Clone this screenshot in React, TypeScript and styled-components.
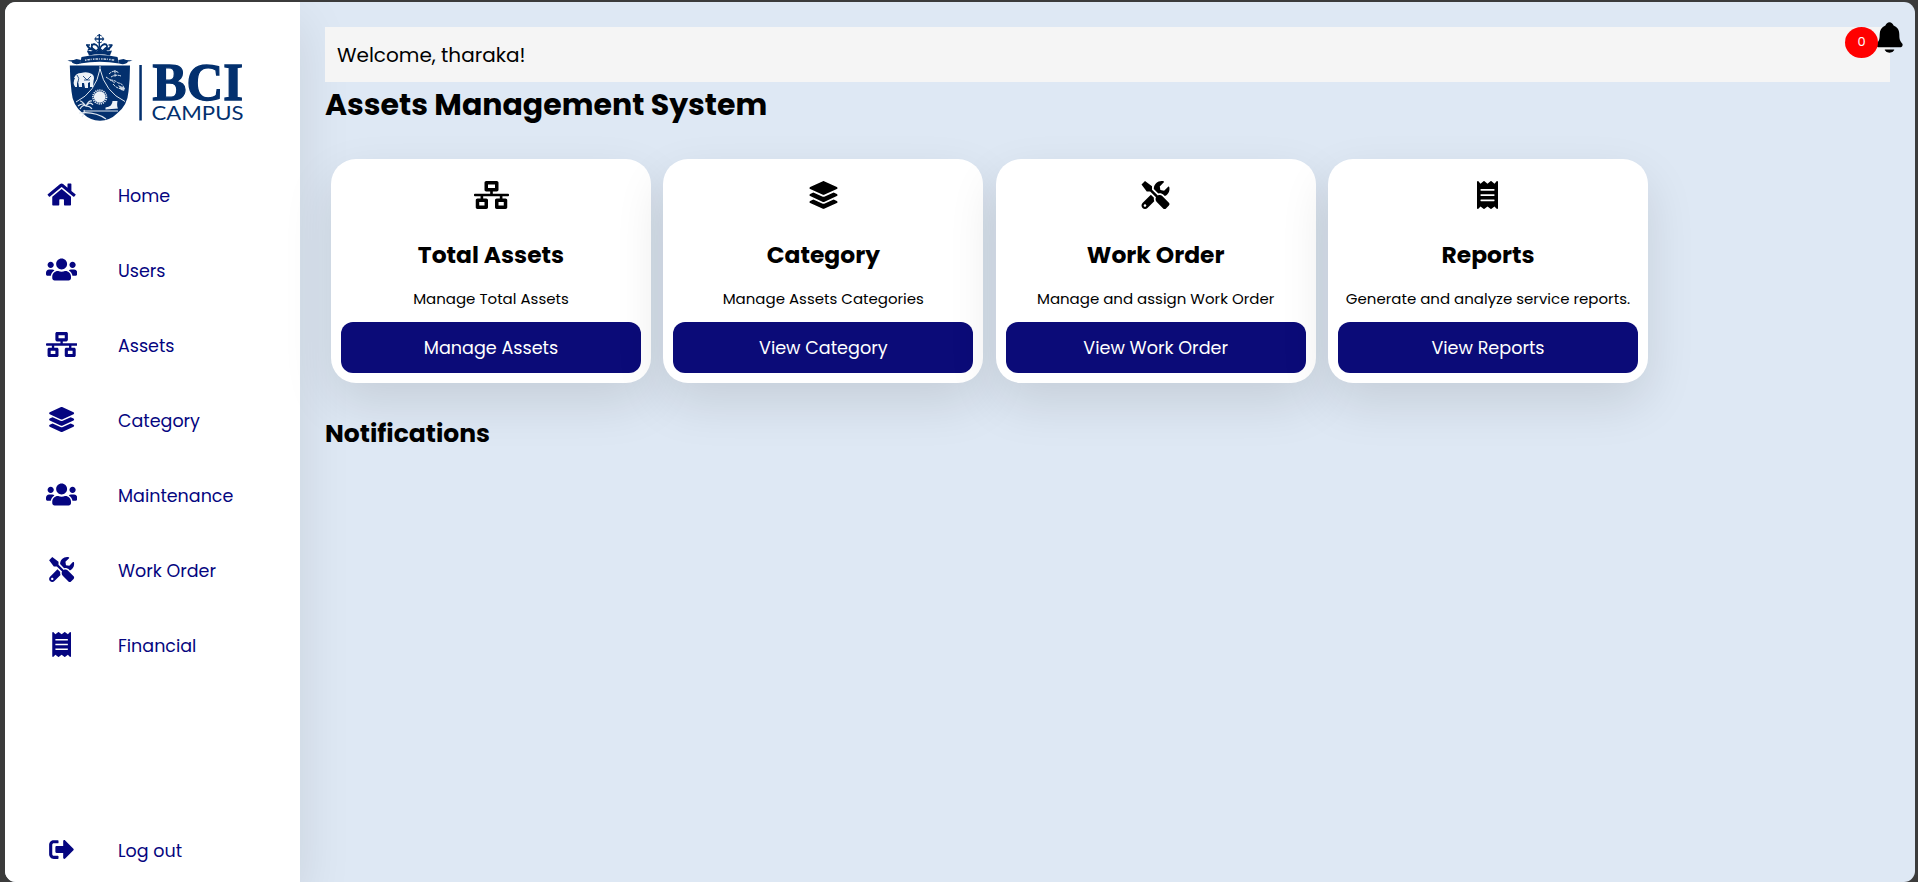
import React from 'react';
import styled, { createGlobalStyle } from 'styled-components';
import {
  FaHome, FaUsers, FaNetworkWired, FaLayerGroup, FaTools, FaReceipt, FaSignOutAlt,
} from 'react-icons/fa';
import { IoNotifications } from 'react-icons/io5';

const navy = '#050580';

const GlobalStyle = createGlobalStyle`
  * { box-sizing: border-box; margin: 0; padding: 0; }
  body { background: #3b3b3b; font-family: Poppins, Inter, 'Open Sans', sans-serif; color: #000; }
`;

const Page = styled.div`
  height: 882px;
  padding: 2px 3px 0 5px;
`;

const Window = styled.div`
  display: flex;
  height: 880px;
  overflow: hidden;
  border-radius: 11px;
  background: #dee8f4;
`;

const Sidebar = styled.aside`
  display: flex;
  flex-direction: column;
  flex: 0 0 295px;
  background: #fff;
  box-shadow: 0 20px 50px rgba(0, 0, 0, 0.1);
`;

const Logo = styled.svg`
  display: block;
  width: 184px;
  height: 100px;
  margin: 28px 0 27px 59px;
  flex: none;
`;

const Nav = styled.nav`
  display: flex;
  flex-direction: column;
  flex: 1;
`;

const NavItem = styled.a<{ $last?: boolean }>`
  display: flex;
  align-items: center;
  height: 75px;
  color: ${navy};
  ${(p) => p.$last && 'margin-top: auto; margin-bottom: -5px;'}
`;

const NavIcon = styled.span`
  display: flex;
  justify-content: center;
  width: 113px;
  font-size: 25px;

  svg { width: 1.25em; }
`;

const NavText = styled.span`
  font-size: 17.5px;
  line-height: 26px;
  padding-top: 2px;
`;

const Main = styled.main`
  flex: 1;
  min-width: 0;
  padding: 25px 25px 0;
`;

const TopBar = styled.header`
  display: flex;
  align-items: center;
  justify-content: space-between;
  height: 55px;
  padding-left: 12px;
  background: #f5f5f5;
`;

const Welcome = styled.span`
  font-size: 20px;
  line-height: 30px;
  padding-top: 1px;
`;

const Alerts = styled.div`
  display: flex;
  align-self: flex-start;
  margin-right: -17px;
`;

const Badge = styled.span`
  position: relative;
  z-index: 1;
  display: flex;
  align-items: center;
  justify-content: center;
  width: 33px;
  height: 31px;
  border-radius: 50%;
  background: #f00;
  color: #fff;
  font-size: 13px;
  padding-bottom: 1px;
`;

const Bell = styled(IoNotifications)`
  font-size: 35px;
  margin: -7px 0 0 -6px;
`;

const Heading = styled.h1`
  font-size: 30px;
  line-height: 45px;
  font-weight: 700;
`;

const Cards = styled.section`
  display: flex;
  gap: 12.33px;
  padding: 32px 6px 0;
`;

const Card = styled.article`
  display: flex;
  flex-direction: column;
  align-items: center;
  width: 320px;
  height: 224px;
  padding: 22px 10px 10px;
  border-radius: 25px;
  background: #fff;
  box-shadow: 0 20px 50px rgba(0, 0, 0, 0.11);
  white-space: nowrap;
`;

const CardIcon = styled.div`
  display: flex;
  height: 28px;
  font-size: 28px;

  svg { width: 1.25em; }
`;

const CardTitle = styled.h2`
  margin-top: 28px;
  font-size: 23.4px;
  line-height: 36px;
  font-weight: 700;
`;

const CardText = styled.p`
  margin-top: 15px;
  font-size: 15px;
  line-height: 22px;
`;

const CardButton = styled.button`
  width: 300px;
  height: 51px;
  margin-top: 12px;
  border: 0;
  border-radius: 12px;
  background: #0b0b78;
  color: #fff;
  font: 400 17.6px Poppins, Inter, sans-serif;
`;

const SubHeading = styled.h2`
  margin-top: 32px;
  font-size: 25px;
  line-height: 37px;
  font-weight: 700;
`;

const navItems = [
  { text: 'Home', icon: FaHome },
  { text: 'Users', icon: FaUsers },
  { text: 'Assets', icon: FaNetworkWired },
  { text: 'Category', icon: FaLayerGroup },
  { text: 'Maintenance', icon: FaUsers },
  { text: 'Work Order', icon: FaTools },
  { text: 'Financial', icon: FaReceipt },
];

const cards = [
  { icon: FaNetworkWired, title: 'Total Assets', text: 'Manage Total Assets', action: 'Manage Assets' },
  { icon: FaLayerGroup, title: 'Category', text: 'Manage Assets Categories', action: 'View Category' },
  { icon: FaTools, title: 'Work Order', text: 'Manage and assign Work Order', action: 'View Work Order' },
  { icon: FaReceipt, title: 'Reports', text: 'Generate and analyze service reports.', action: 'View Reports' },
];

function BrandLogo() {
  return (
    <Logo viewBox="64 30 184 100" fill="#03306e">
      {/* cross and crown */}
      <g stroke="#03306e" fill="none">
        <circle cx="99.3" cy="39" r="3.8" strokeWidth="1" strokeDasharray="2 1" />
        <path d="M99.3 34v13M94.5 39h9.6" strokeWidth="1.4" />
        <path d="M87 45q2 4 6 5q-3-5 1-6q4 1 5.300 6q1.500-5 5.500-6q4 1 1 6q4-1 6-5" strokeWidth="1.8" />
        <path d="M86 45h4M91 44.500h4M103 44.500h4M108.500 45h4" strokeWidth="1.6" />
        <path d="M88 50l4-2 4 3 3.300-3 3.300 3 3-3 4 2M87.500 51.500q12 4 23.500 0" strokeWidth="1.600" />
      </g>
      <path d="M87 50.500l4 1 3-2 2.500 2 3-3 3 3 2.500-2 3 2 4-1-2 5q-10.500-2.500-21 0z" />
      {/* ribbon */}
      <path d="M81.500 57q18-4 36 0l1.500 6.500q-19-3.500-39 0z" />
      <path d="M67.500 60q5 1 9-1l4.500 1-.5 3.500q-5 1.500-8-.5l-1-1.500q-2 0-4-1.500zM132.500 60q-5 1-9-1l-5 1 .5 3.500q5 1.500 8-.5l1-1.500q2 0 4.500-1.500z" />
      <path d="M85 60.200q14-2.500 30 0" stroke="#c8d3e2" strokeWidth="1.500" strokeDasharray="1.500 1 2.500 .8 1 1.300" fill="none" />
      {/* shield */}
      <path d="M69.800 65.500h60.200q0 14-1.500 26q-1 14-11.500 22q-7 7-17 7.300q-10-.3-17-7.300q-10.500-8-11.500-22q-1.500-12-1.700-26z" />
      <g stroke="#dfe7f0" fill="none" strokeWidth="1">
        <path d="M100 66v4M100 69q-4 23-24 33M100 69q5 23 25 32.500M84 111h34" />
        <path d="M79 113q16-2 27 6M84 110q1 3-2 7M78 106q5-4 8 0q4-5 7-1M80 109q3-5 6-3q4 0 6 3M86 106q-4-5-6-5M86 106q3-6 6-5" strokeWidth="1.200" />
        <path d="M109 74q5-5 10-1M111 77q5-3 10-1M110 80q5 0 8 3q5 0 6 6M106 77q6 4 9 6M115 70v7M113 84q4 5 10 5" strokeWidth="1" strokeDasharray="3 .7" />
      </g>
      <g fill="#edf2f7">
        <path d="M74 78q2-5 7-5q6-2 11 1q3 2 1.500 7l-.5 6h-3v-5l-2 1v5h-3l-1-5-2 0v4h-3l-1-6-1 2v4h-1.800q-3-4-.2-9z" />
        <circle cx="99.700" cy="97" r="5.800" />
        <circle cx="99.700" cy="97" r="6.800" fill="none" stroke="#edf2f7" strokeWidth="1.700" strokeDasharray="1.200 .9" />
        <path d="M112.500 101h5q-1 5 .5 7.500l-12.500 1v-2q7-1 7-6.500z" />
        <path d="M118 85l7 3-1 3-3-1z" opacity=".8" />
      </g>
      <path d="M77 75q3 3 1 7M83 76l4 4 4-4M84 80h6" stroke="#03306e" strokeWidth=".8" fill="none" />
      <rect x="139.300" y="65" width="2.500" height="55.500" />
      <text x="152.500" y="100" fontFamily="'Liberation Serif', serif" fontWeight="700" fontSize="52.500"
        textLength="90.500" lengthAdjust="spacingAndGlyphs" stroke="#03306e" strokeWidth="1.300">BCI</text>
      <text x="151.500" y="120.300" fontFamily="Lato, sans-serif" fontWeight="400" fontSize="19"
        textLength="92" lengthAdjust="spacingAndGlyphs">CAMPUS</text>
    </Logo>
  );
}

export default function App() {
  return (
    <>
      <GlobalStyle />
      <Page>
        <Window>
          <Sidebar>
            <BrandLogo />
            <Nav>
              {navItems.map(({ text, icon: Icon }) => (
                <NavItem key={text}>
                  <NavIcon><Icon /></NavIcon>
                  <NavText>{text}</NavText>
                </NavItem>
              ))}
              <NavItem $last>
                <NavIcon><FaSignOutAlt /></NavIcon>
                <NavText>Log out</NavText>
              </NavItem>
            </Nav>
          </Sidebar>
          <Main>
            <TopBar>
              <Welcome>Welcome, tharaka!</Welcome>
              <Alerts>
                <Badge>0</Badge>
                <Bell />
              </Alerts>
            </TopBar>
            <Heading>Assets Management System</Heading>
            <Cards>
              {cards.map(({ icon: Icon, title, text, action }) => (
                <Card key={title}>
                  <CardIcon><Icon /></CardIcon>
                  <CardTitle>{title}</CardTitle>
                  <CardText>{text}</CardText>
                  <CardButton>{action}</CardButton>
                </Card>
              ))}
            </Cards>
            <SubHeading>Notifications</SubHeading>
          </Main>
        </Window>
      </Page>
    </>
  );
}
